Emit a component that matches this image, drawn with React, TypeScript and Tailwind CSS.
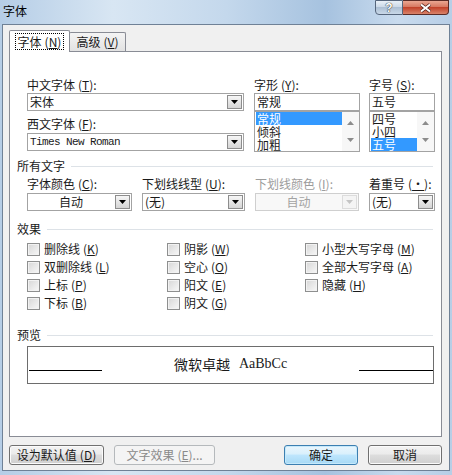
import React from "react";

function Down({ c = "#000" }: { c?: string }) {
  return (
    <svg width="7" height="4" viewBox="0 0 7 4">
      <path d="M0 0h7L3.5 4z" fill={c} />
    </svg>
  );
}
function Up({ c = "#000" }: { c?: string }) {
  return (
    <svg width="7" height="4" viewBox="0 0 7 4">
      <path d="M0 4h7L3.5 0z" fill={c} />
    </svg>
  );
}

function K({ k }: { k: string }) {
  return (
    <span className="ml-[3px]">
      (<span className="underline underline-offset-1">{k}</span>)
    </span>
  );
}

function Lbl({ t, k, dis }: { t: string; k: string; dis?: boolean }) {
  return (
    <div
      className={
        dis
          ? "h-[14px] leading-[14px] whitespace-nowrap text-[#9c9c9c]"
          : "h-[14px] leading-[14px] whitespace-nowrap text-[#1a1a1a]"
      }
    >
      {t}
      <K k={k} />:
    </div>
  );
}

function Combo({
  cls = "",
  children,
  center,
  dis,
}: {
  cls?: string;
  children: React.ReactNode;
  center?: boolean;
  dis?: boolean;
}) {
  return (
    <div
      className={`flex h-[18px] border ${
        dis ? "border-[#cfcfcf] bg-[#f8f8f8]" : "border-[#a3a3a3] bg-white"
      } ${cls}`}
    >
      <div
        className={`flex-1 flex items-center leading-[14px] whitespace-nowrap ${
          center ? "justify-center" : "pl-[2px]"
        } ${dis ? "text-[#a3a3a3]" : "text-[#1a1a1a]"}`}
      >
        {children}
      </div>
      <div
        className={`m-px w-[15px] flex items-center justify-center border ${
          dis
            ? "border-[#dcdcdc] bg-[#f4f4f4]"
            : "border-[#8d8d8d] bg-[linear-gradient(#f6f6f6,#d4d4d4)]"
        }`}
      >
        <Down c={dis ? "#c4c4c4" : "#000"} />
      </div>
    </div>
  );
}

function ListBox({ items, sel }: { items: string[]; sel: number }) {
  return (
    <div className="flex h-[41px] border border-[#a3a3a3] bg-white">
      <div className="flex-1 pl-px">
        {items.map((it, i) => (
          <div
            key={it}
            className={
              i === sel
                ? "h-[13px] leading-[13px] text-[12px] bg-[#3399ff] text-white pl-px"
                : "h-[13px] leading-[13px] text-[12px] pl-px"
            }
          >
            {it}
          </div>
        ))}
      </div>
      <div className="w-[17px] flex flex-col justify-between items-center py-[9px] bg-[#f7f7f7]">
        <Up c="#8c8c8c" />
        <Down c="#8c8c8c" />
      </div>
    </div>
  );
}

function Hdr({ t }: { t: string }) {
  return (
    <div className="flex items-center h-[14px]">
      <span className="leading-[14px]">{t}</span>
      <div className="flex-1 h-px bg-[#dde2e7] ml-[6px] mr-[2px]" />
    </div>
  );
}

function Cb({ t, k }: { t: string; k: string }) {
  return (
    <div className="flex items-center h-[18px]">
      <div className="w-[13px] h-[13px] border border-[#8e8f8f] bg-[linear-gradient(135deg,#d6d6d6,#f8f8f8)] shadow-[inset_0_0_0_1px_#f2f2f2]" />
      <span className="ml-[4px] leading-[14px] whitespace-nowrap">
        {t}
        <K k={k} />
      </span>
    </div>
  );
}

const btn =
  "h-[20px] flex items-center justify-center rounded-[3px] border border-[#707070] bg-[linear-gradient(#f3f3f3_0%,#ebebeb_45%,#dddddd_50%,#cfcfcf_100%)] shadow-[inset_0_0_0_1px_#fbfbfb] leading-[14px] whitespace-nowrap";

export default function App() {
  return (
    <div className="w-[452px] h-[475px] flex flex-col px-[2px] pb-[4px] bg-[linear-gradient(90deg,#b5cde6,#d8e6f3_25%,#c4d8ec_50%,#a6c2df_72%,#c9dbee_88%,#b7cee6)] text-[12px] text-[#1a1a1a] font-['Noto_Sans_CJK_SC','Noto_Sans',sans-serif]">
      {/* title bar */}
      <div className="h-[24px] flex items-start">
        <div className="pl-px pt-[4px] leading-[14px] text-[12px] text-black">字体</div>
        <div className="ml-auto mr-px flex">
          <div className="w-[28px] h-[15px] rounded-bl-[4px] border border-[#56667c] bg-[linear-gradient(#e9f0f7,#c9d7e6_50%,#adc0d4_50%,#c9d8e8)] flex items-center justify-center">
            <span className="text-[12px] leading-[12px] font-bold text-white [text-shadow:0_0_1px_#222,0_0_1px_#222] font-['Liberation_Sans',sans-serif]">?</span>
          </div>
          <div className="w-[46px] h-[15px] rounded-br-[4px] border border-l-0 border-[#5a2b26] bg-[linear-gradient(#eaa792,#d5735c_50%,#c2432b_50%,#d9836a)] flex items-center justify-center">
            <svg width="13" height="10" viewBox="0 0 13 10">
              <path d="M2 1.5L11 8.5M11 1.5L2 8.5" stroke="#4a1c16" strokeWidth="3.4" />
              <path d="M2 1.5L11 8.5M11 1.5L2 8.5" stroke="#ffffff" strokeWidth="2" />
            </svg>
          </div>
        </div>
      </div>

      {/* client */}
      <div className="flex-1 border border-[#6f8196] bg-[#f0f0f0] flex flex-col pt-[5px]">
        {/* tabs */}
        <div className="flex items-end h-[21px] ml-[6px]">
          <div className="w-[61px] h-[22px] -mb-px relative z-10 bg-white border border-b-0 border-[#898c95] rounded-t-[2px] flex justify-center pt-[2px]">
            <div className="h-[17px] px-[2px] border border-dotted border-black leading-[15px] whitespace-nowrap">
              字体
              <K k="N" />
            </div>
          </div>
          <div className="w-[57px] h-[19px] -ml-px border border-b-0 border-[#898c95] rounded-t-[2px] bg-[linear-gradient(#f4f4f4,#e2e2e2)] flex items-center justify-center leading-[14px] whitespace-nowrap">
            高级
            <K k="V" />
          </div>
        </div>

        {/* panel */}
        <div className="w-[433px] h-[386px] ml-[6px] border border-[#898c95] bg-white">
          <div className="pl-[7px] pr-[6px] pt-[26px] flex flex-col">
            {/* fonts */}
            <div className="flex ml-[10px]">
              <div className="w-[217px] flex flex-col">
                <Lbl t="中文字体" k="T" />
                <Combo cls="mt-px">宋体</Combo>
                <div className="mt-[6px]">
                  <Lbl t="西文字体" k="F" />
                </div>
                <Combo cls="mt-[2px]">
                  <span className="font-['Liberation_Mono',monospace] text-[11px] tracking-[-0.6px]">
                    Times New Roman
                  </span>
                </Combo>
              </div>
              <div className="ml-[10px] w-[106px] flex flex-col">
                <Lbl t="字形" k="Y" />
                <div className="mt-px h-[18px] border border-[#a3a3a3] bg-white pl-[2px] leading-[16px]">常规</div>
                <ListBox items={["常规", "倾斜", "加粗"]} sel={0} />
              </div>
              <div className="ml-[9px] w-[66px] flex flex-col">
                <Lbl t="字号" k="S" />
                <div className="mt-px h-[18px] border border-[#a3a3a3] bg-white pl-[2px] leading-[16px]">五号</div>
                <ListBox items={["四号", "小四", "五号"]} sel={2} />
              </div>
            </div>

            {/* 所有文字 */}
            <div className="mt-[7px]">
              <Hdr t="所有文字" />
            </div>
            <div className="mt-[4px] ml-[10px] flex gap-[10px]">
              <div className="w-[105px] flex flex-col">
                <Lbl t="字体颜色" k="C" />
                <Combo cls="mt-[2px]" center>
                  自动
                </Combo>
              </div>
              <div className="w-[103px] flex flex-col">
                <Lbl t="下划线线型" k="U" />
                <Combo cls="mt-[2px]">(无)</Combo>
              </div>
              <div className="w-[104px] flex flex-col">
                <Lbl t="下划线颜色" k="I" dis />
                <Combo cls="mt-[2px]" center dis>
                  自动
                </Combo>
              </div>
              <div className="w-[66px] flex flex-col">
                <Lbl t="着重号" k="·" />
                <Combo cls="mt-[2px]">(无)</Combo>
              </div>
            </div>

            {/* 效果 */}
            <div className="mt-[11px]">
              <Hdr t="效果" />
            </div>
            <div className="mt-[4px] ml-[10px] flex">
              <div className="w-[140px] flex flex-col">
                <Cb t="删除线" k="K" />
                <Cb t="双删除线" k="L" />
                <Cb t="上标" k="P" />
                <Cb t="下标" k="B" />
              </div>
              <div className="w-[138px] flex flex-col">
                <Cb t="阴影" k="W" />
                <Cb t="空心" k="O" />
                <Cb t="阳文" k="E" />
                <Cb t="阴文" k="G" />
              </div>
              <div className="flex flex-col">
                <Cb t="小型大写字母" k="M" />
                <Cb t="全部大写字母" k="A" />
                <Cb t="隐藏" k="H" />
              </div>
            </div>

            {/* 预览 */}
            <div className="mt-[16px]">
              <Hdr t="预览" />
            </div>
            <div className="ml-[10px] mt-[4px] w-[407px] h-[38px] border border-[#6d6d6d] bg-white flex">
              <div className="ml-px mt-[23px] w-[73px] h-px bg-black" />
              <div className="flex-1 flex justify-center items-start pt-[8px]">
                <span className="text-[14px] leading-[18px]">微软卓越</span>
                <span className="ml-[9px] text-[14px] leading-[18px] font-['Liberation_Serif',serif]">AaBbCc</span>
              </div>
              <div className="mt-[23px] w-[74px] h-px bg-black" />
            </div>
          </div>
        </div>

        {/* buttons */}
        <div className="mt-[8px] ml-[6px] mr-[7px] flex">
          <div className={`${btn} w-[95px]`}>
            设为默认值
            <K k="D" />
          </div>
          <div className="ml-[10px] w-[101px] h-[20px] flex items-center justify-center rounded-[3px] border border-[#b5b9bc] bg-[#f4f4f4] text-[#8a8a8a] leading-[14px] whitespace-nowrap">
            文字效果
            <K k="E" />
            ...
          </div>
          <div className="ml-auto w-[74px] h-[20px] flex items-center justify-center rounded-[3px] border border-[#3c7fb1] bg-[linear-gradient(#eaf6fd_0%,#d9f0fc_45%,#bee6fd_50%,#a7d9f5_100%)] shadow-[inset_0_0_0_1px_#c5e9fb] leading-[14px]">
            确定
          </div>
          <div className={`${btn} ml-[10px] w-[74px]`}>取消</div>
        </div>
      </div>
    </div>
  );
}
